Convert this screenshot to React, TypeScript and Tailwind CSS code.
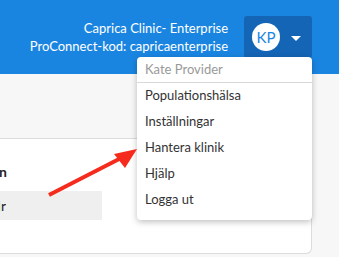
import React from 'react';

const menuItems = ['Populationshälsa', 'Inställningar', 'Hantera klinik', 'Hjälp', 'Logga ut'];

const App = (): React.ReactElement => (
  <div className="relative h-[257px] w-[339px] overflow-hidden bg-[#f7f7f7] font-['Lato',sans-serif]">
    <header className="flex h-[74px] items-center justify-end bg-[#1a85e1] pr-[27px]">
      <div className="mr-4 text-right text-[13px] leading-[18.5px] text-white">
        <div>Caprica Clinic- Enterprise</div>
        <div>ProConnect-kod: capricaenterprise</div>
      </div>
      <button className="flex h-[42px] w-[68px] items-center rounded-[3px] bg-[#1565b7] pl-2">
        <span className="flex h-7 w-7 items-center justify-center rounded-full bg-white text-[15px] text-[#1a85e1]">
          KP
        </span>
        <svg className="ml-[11px] mt-[3px]" width="10" height="5" viewBox="0 0 10 5">
          <path d="M0 0h10L5 5z" fill="#fff" />
        </svg>
      </button>
    </header>

    <div className="h-[64px]" />

    <section className="h-[116px] w-[312px] rounded-br-[6px] border-t border-r border-b border-[#dcdcdc] bg-white">
      <div className="mt-[24px] flex w-[7px] justify-end overflow-hidden whitespace-nowrap text-[14px] font-bold leading-[18px] text-[#222]">
        Klinikinformation
      </div>
      <div className="mt-[10px] flex h-[29px] w-[102px] items-center bg-[#efefef]">
        <div className="flex w-[6px] justify-end overflow-hidden whitespace-nowrap text-[14px] text-[#222]">
          Caprica Clinic- Enterprise Namn Hr
        </div>
      </div>
    </section>

    {/* user menu */}
    <div className="absolute left-[137px] top-[57px] w-[175px] rounded-[4px] bg-white pb-[7px] shadow-[0_2px_6px_rgba(0,0,0,0.25)]">
      <div className="flex h-[26px] items-center border-b border-[#d9d9d9] pl-2 text-[13px] text-[#999]">
        Kate Provider
      </div>
      {menuItems.map((item) => (
        <div key={item} className="flex h-[26px] items-center pl-2 text-[13px] text-[#333]">
          {item}
        </div>
      ))}
    </div>

    <svg className="pointer-events-none absolute left-0 top-0" width="339" height="257">
      <line x1="49" y1="195" x2="123" y2="157" stroke="#f52b1d" strokeWidth="4" />
      <polygon points="137,149 114,154 125,168" fill="#f52b1d" />
    </svg>
  </div>
);

export default App;
